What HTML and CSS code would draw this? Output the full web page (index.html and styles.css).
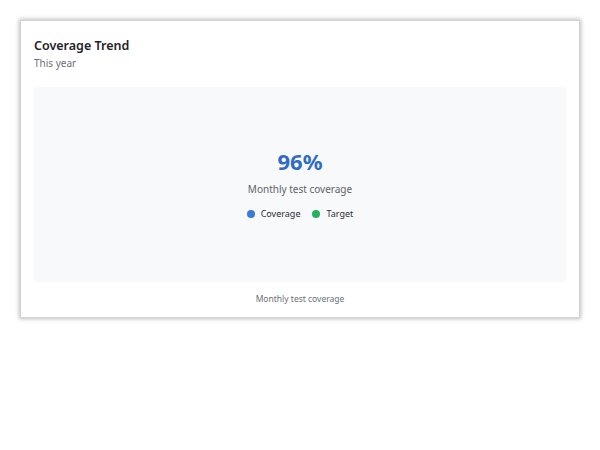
FILE: index.html
```html
<!DOCTYPE html>
<html>
<head>
<meta charset="utf-8">
<link rel="stylesheet" href="styles.css">
</head>
<body>
<div class="card">
  <div class="header">
    <div class="title">Coverage Trend</div>
    <div class="subtitle">This year</div>
  </div>
  <div class="chart">
    <div class="value">96%</div>
    <div class="label">Monthly test coverage</div>
    <div class="legend">
      <span class="item"><span class="dot blue"></span>Coverage</span>
      <span class="item"><span class="dot green"></span>Target</span>
    </div>
  </div>
  <div class="footer">Monthly test coverage</div>
</div>
</body>
</html>
```
FILE: styles.css
```css
html, body { margin: 0; padding: 0; background: #fff; }
body { padding: 20px; font-family: "Segoe UI", "Noto Sans", "Open Sans", sans-serif; }
.card {
  width: 560px;
  height: 298px;
  box-sizing: border-box;
  background: #fff;
  border: 1px solid #d4d4d4;
  box-shadow: 0 0 4px 1px rgba(0,0,0,0.25);
  padding: 16px 13px 0 13px;
  display: flex;
  flex-direction: column;
}
.title { font-size: 12.5px; font-weight: 600; color: #1f2329; line-height: 18px; }
.subtitle { font-size: 10px; color: #6b6f76; line-height: 14px; margin-top: 1px; }
.chart {
  margin-top: 17px;
  height: 195px;
  background: #f8f9fb;
  border-radius: 4px;
  display: flex;
  flex-direction: column;
  align-items: center;
  justify-content: center;
}
.value { font-size: 22px; font-weight: 700; color: #2f6bc4; line-height: 28px; margin-top: -3px; }
.label { font-size: 10px; color: #5f636a; line-height: 14px; margin-top: 7px; }
.legend { display: flex; gap: 12px; margin-top: 12px; font-size: 9px; color: #2a2d33; line-height: 12px; }
.item { display: flex; align-items: center; gap: 6px; }
.dot { width: 8px; height: 8px; border-radius: 50%; display: inline-block; }
.blue { background: #3a7bd5; }
.green { background: #22b25b; }
.footer { text-align: center; font-size: 8.5px; color: #6b6f76; margin-top: 11px; line-height: 12px; }
```
